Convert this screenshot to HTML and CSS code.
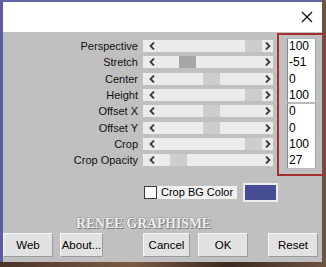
FILE: index.html
```html
<!DOCTYPE html>
<html lang="en">
<head>
  <meta charset="UTF-8" />
  <title>Perspective</title>
  <link rel="stylesheet" href="styles.css">
</head>
<body>
  <div class="window">
    <div class="titlebar">
      <svg class="close" width="12" height="12" viewBox="0 0 12 12">
        <path d="M1 1 L11 11 M11 1 L1 11" stroke="#111" stroke-width="1.3" fill="none"/>
      </svg>
    </div>

    <div class="panel">
      <div class="sliders">
        <div class="label">Perspective</div>
        <div class="bar"><svg class="arr left" width="6" height="8"><polyline points="5,0.5 1.5,4 5,7.5"/></svg><div class="thumb" style="margin-left: 102px"></div><svg class="arr right" width="6" height="8"><polyline points="1,0.5 4.5,4 1,7.5"/></svg></div>
        <div class="field first">100</div>

        <div class="label">Stretch</div>
        <div class="bar"><svg class="arr left" width="6" height="8"><polyline points="5,0.5 1.5,4 5,7.5"/></svg><div class="thumb active" style="margin-left: 36px"></div><svg class="arr right" width="6" height="8"><polyline points="1,0.5 4.5,4 1,7.5"/></svg></div>
        <div class="field">-51</div>

        <div class="label">Center</div>
        <div class="bar"><svg class="arr left" width="6" height="8"><polyline points="5,0.5 1.5,4 5,7.5"/></svg><div class="thumb" style="margin-left: 60px"></div><svg class="arr right" width="6" height="8"><polyline points="1,0.5 4.5,4 1,7.5"/></svg></div>
        <div class="field">0</div>

        <div class="label">Height</div>
        <div class="bar"><svg class="arr left" width="6" height="8"><polyline points="5,0.5 1.5,4 5,7.5"/></svg><div class="thumb" style="margin-left: 102px"></div><svg class="arr right" width="6" height="8"><polyline points="1,0.5 4.5,4 1,7.5"/></svg></div>
        <div class="field last">100</div>

        <div class="label">Offset X</div>
        <div class="bar"><svg class="arr left" width="6" height="8"><polyline points="5,0.5 1.5,4 5,7.5"/></svg><div class="thumb" style="margin-left: 60px"></div><svg class="arr right" width="6" height="8"><polyline points="1,0.5 4.5,4 1,7.5"/></svg></div>
        <div class="field first">0</div>

        <div class="label">Offset Y</div>
        <div class="bar"><svg class="arr left" width="6" height="8"><polyline points="5,0.5 1.5,4 5,7.5"/></svg><div class="thumb" style="margin-left: 60px"></div><svg class="arr right" width="6" height="8"><polyline points="1,0.5 4.5,4 1,7.5"/></svg></div>
        <div class="field">0</div>

        <div class="label">Crop</div>
        <div class="bar"><svg class="arr left" width="6" height="8"><polyline points="5,0.5 1.5,4 5,7.5"/></svg><div class="thumb" style="margin-left: 102px"></div><svg class="arr right" width="6" height="8"><polyline points="1,0.5 4.5,4 1,7.5"/></svg></div>
        <div class="field">100</div>

        <div class="label">Crop Opacity</div>
        <div class="bar"><svg class="arr left" width="6" height="8"><polyline points="5,0.5 1.5,4 5,7.5"/></svg><div class="thumb" style="margin-left: 27px"></div><svg class="arr right" width="6" height="8"><polyline points="1,0.5 4.5,4 1,7.5"/></svg></div>
        <div class="field last">27</div>
      </div>

      <div class="bg-row">
        <div class="checkbox"></div>
        <div class="check-label">Crop BG Color</div>
        <div class="swatch"></div>
      </div>

      <div class="watermark">RENEE GRAPHISME</div>

      <div class="buttons">
        <button class="btn btn-web">Web</button>
        <button class="btn btn-about">About...</button>
        <button class="btn btn-cancel">Cancel</button>
        <button class="btn btn-ok">OK</button>
        <button class="btn btn-reset">Reset</button>
      </div>
    </div>

    <div class="highlight"></div>
  </div>
</body>
</html>
```

FILE: styles.css
```css
* {
  box-sizing: border-box;
}

body {
  margin: 0;
  padding: 0;
  width: 326px;
  height: 267px;
  overflow: hidden;
  background: linear-gradient(to right, #4a3428, #7a5c44 40%, #3c2a20 70%, #6e5440);
  font-family: 'Liberation Sans', Arial, sans-serif;
  color: #000;
}

.window {
  position: relative;
  width: 322px;
  border-top: 2px solid #6163a6;
  border-left: 3px solid #5b5da1;
}

.titlebar {
  height: 30px;
  background: #fff;
  display: flex;
  justify-content: flex-end;
  align-items: flex-start;
  padding: 9px 9px 0 0;
}

.panel {
  background: #c0c0c0;
  padding: 6px 0 5px 0;
}

.sliders {
  display: grid;
  grid-template-columns: 140px 144px 29px;
  grid-auto-rows: 16.33px;
  align-items: center;
}

.label {
  font-size: 11px;
  text-align: right;
  padding-right: 5px;
  white-space: nowrap;
  color: #111;
}

.bar {
  width: 130px;
  height: 12px;
  background: #ebebeb;
  display: grid;
  align-items: center;
}

.bar > * {
  grid-area: 1 / 1;
}

.thumb {
  width: 17px;
  height: 12px;
  background: #cdcdcd;
  justify-self: start;
}

.thumb.active {
  background: #a6a6a6;
}

.arr {
  fill: none;
  stroke: #3a3a3a;
  stroke-width: 1.8;
}

.arr.left {
  justify-self: start;
  margin-left: 6px;
}

.arr.right {
  justify-self: end;
  margin-right: 2px;
}

.field {
  align-self: stretch;
  background: #fff;
  border-left: 1px solid #8c8c8c;
  border-right: 1px solid #a4a4a4;
  font-size: 12px;
  line-height: 16px;
  padding-left: 1px;
}

.field.first {
  border-top: 1px solid #b8b8b8;
  line-height: 15px;
}

.field.last {
  border-bottom: 1px solid #b8b8b8;
}

.bg-row {
  display: flex;
  align-items: center;
  height: 19px;
  margin-top: 14.4px;
  padding-left: 141px;
}

.checkbox {
  width: 13px;
  height: 13px;
  background: #fff;
  border: 1px solid #3c3c3c;
}

.check-label {
  width: 80px;
  height: 13px;
  background: #f1f1f1;
  font-size: 11px;
  line-height: 13px;
  padding-left: 4px;
}

.swatch {
  width: 35px;
  height: 19px;
  margin-left: 6px;
  background: #474d92;
  border: 2px solid #ededed;
}

.watermark {
  margin-top: 14px;
  height: 15px;
  line-height: 15px;
  padding-left: 73px;
  font-family: 'Liberation Serif', 'Times New Roman', serif;
  font-weight: bold;
  font-size: 13.7px;
  color: #ececec;
  text-shadow: 1px 1px 0 #7e7e7e, -1px 0 0 #a2a2a2, 0 -1px 0 #a8a8a8;
}

.buttons {
  display: flex;
  margin-top: 2px;
}

.btn {
  height: 24px;
  padding: 0;
  background: #e2e2e2;
  border: 1px solid;
  border-color: #f6f6f6 #9c9c9c #9c9c9c #f6f6f6;
  font-family: 'Liberation Sans', Arial, sans-serif;
  font-size: 11.5px;
  color: #000;
}

.btn-web { width: 50px; }
.btn-about { width: 43px; margin-left: 7px; }
.btn-cancel { width: 47px; margin-left: 40px; }
.btn-ok { width: 50px; margin-left: 8px; }
.btn-reset { width: 50px; margin-left: 20px; }

/* red annotation frame over the value column */
.highlight {
  position: absolute;
  left: 274px;
  top: 31px;
  width: 48px;
  height: 143px;
  border: 2px solid #a63030;
  border-right-width: 1px;
}
```
